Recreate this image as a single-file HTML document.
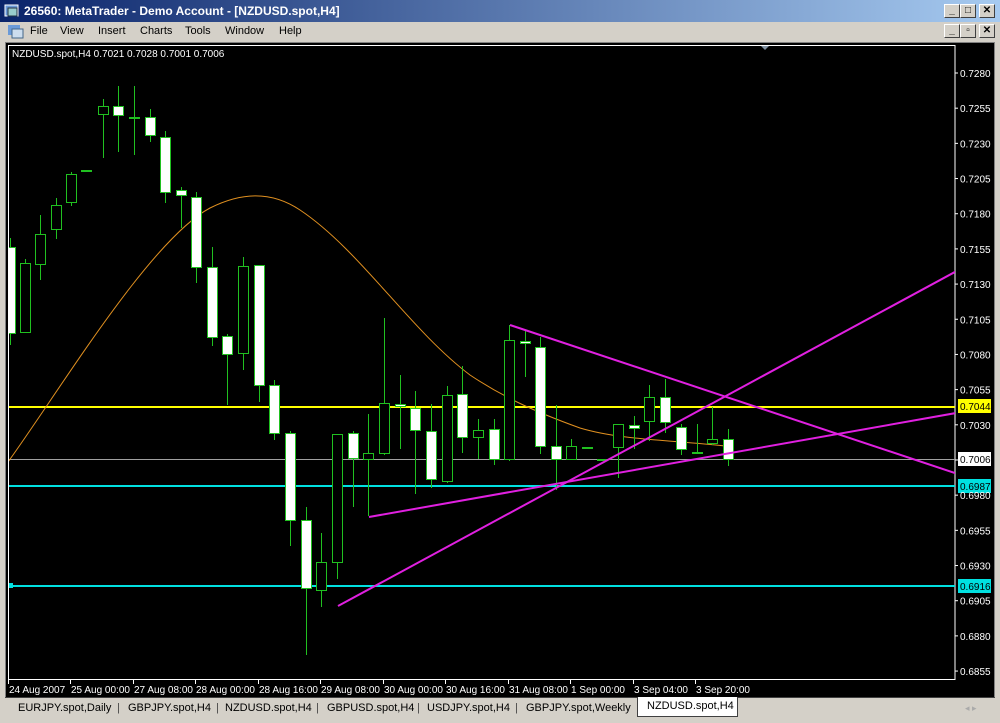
<!DOCTYPE html>
<html><head><meta charset="utf-8"><style>
*{margin:0;padding:0;box-sizing:border-box}
body{width:1000px;height:723px;overflow:hidden;background:#d4d0c8;font-family:Tahoma,"Liberation Sans",sans-serif;font-size:11px;position:relative}
.title{position:absolute;left:0;top:0;width:1000px;height:22px;background:linear-gradient(90deg,#0a246a,#a6caf0);color:#fff;font-weight:bold;font-size:12px;line-height:22px;padding-left:24px}
.menu{position:absolute;left:0;top:22px;width:1000px;height:19px;line-height:19px;font-size:11px}
.menu span{position:absolute;top:0}
.btn{position:absolute;width:16px;height:14px;background:#d4d0c8;border:1px solid;border-color:#fff #404040 #404040 #fff;font-size:10px;line-height:12px;text-align:center;color:#000;font-weight:bold}
.tabs{position:absolute;left:0;top:697px;width:1000px;height:26px;background:#d4d0c8}
.tab{position:absolute;top:3px;height:17px;line-height:16px;font-size:11px;color:#000}
</style></head><body>
<div class="title"><svg style="position:absolute;left:4px;top:3px" width="16" height="16"><rect x="1" y="2" width="13" height="11" fill="#6a9ad8" stroke="#fff"/><rect x="4" y="5" width="9" height="8" fill="#9cc" stroke="#234"/></svg>26560: MetaTrader - Demo Account - [NZDUSD.spot,H4]</div>
<div class="btn" style="left:944px;top:4px">_</div><div class="btn" style="left:960px;top:4px">□</div><div class="btn" style="left:979px;top:4px">✕</div>
<div class="menu">
<svg style="position:absolute;left:8px;top:2px" width="16" height="15"><rect x="0" y="1" width="12" height="10" fill="#6a9ad8"/><rect x="4" y="5" width="11" height="9" fill="#cde" stroke="#468"/></svg>
<span style="left:30px">File</span><span style="left:60px">View</span><span style="left:98px">Insert</span><span style="left:140px">Charts</span><span style="left:185px">Tools</span><span style="left:225px">Window</span><span style="left:279px">Help</span>
</div>
<div class="btn" style="left:944px;top:24px">_</div><div class="btn" style="left:960px;top:24px">▫</div><div class="btn" style="left:979px;top:24px">✕</div>
<svg style="position:absolute;left:0;top:41px" width="1000" height="656" viewBox="0 41 1000 656" font-family="Tahoma,'Liberation Sans',sans-serif" font-size="10">
<rect x="0" y="41" width="1000" height="656" fill="#d4d0c8"/>
<rect x="5" y="42" width="990" height="655" fill="#808080"/>
<rect x="6" y="43" width="988" height="654" fill="#000"/>
<rect x="8.5" y="45.5" width="946.5" height="634" fill="none" stroke="#fff"/>
<text x="12" y="57" fill="#fff">NZDUSD.spot,H4  0.7021 0.7028 0.7001 0.7006</text>
<polygon points="761,46 769,46 765,50" fill="#8090a0"/>
<defs><clipPath id="c"><rect x="9" y="46" width="946" height="633"/></clipPath></defs>
<g clip-path="url(#c)">
<line x1="9" y1="407" x2="955" y2="407" stroke="#ffff00" stroke-width="2"/>
<line x1="9" y1="459.5" x2="955" y2="459.5" stroke="#a0a0a0"/>
<line x1="9" y1="486" x2="955" y2="486" stroke="#00e0e0" stroke-width="2"/>
<line x1="9" y1="586" x2="955" y2="586" stroke="#00e0e0" stroke-width="2"/>
<rect x="8" y="583" width="5" height="5" fill="#00e0e0"/>
<path d="M8,462 C60,390 150,240 210,208 C240,193 270,190 300,210 C360,250 410,330 470,375 C500,395 530,410 580,428 C620,440 670,440 725,446" fill="none" stroke="#e09020" stroke-width="1"/>
<g stroke="#20c020" stroke-width="1" id="cs"></g>
<line x1="510" y1="325" x2="1000" y2="488" stroke="#e020e0" stroke-width="2"/>
<line x1="338" y1="606" x2="990" y2="253" stroke="#e020e0" stroke-width="2"/>
<line x1="369" y1="517" x2="990" y2="407" stroke="#e020e0" stroke-width="2"/>
</g>
<g fill="#fff">
<rect x="958" y="399" width="33" height="14" fill="#ffff00"/><text x="960" y="410" fill="#000">0.7044</text>
<rect x="958" y="452" width="33" height="14" fill="#fff"/><text x="960" y="463" fill="#000">0.7006</text>
<rect x="958" y="479" width="33" height="14" fill="#00e0e0"/><text x="960" y="490" fill="#000">0.6987</text>
<rect x="958" y="579" width="33" height="14" fill="#00e0e0"/><text x="960" y="590" fill="#000">0.6916</text>
</g>
<g id="ax" fill="#fff"></g>
</svg>
<div class="tabs">
<div style="position:absolute;left:5px;top:0;width:990px;height:1px;background:#404040"></div>
<span class="tab" style="left:18px">EURJPY.spot,Daily</span><span class="tab" style="left:117px;color:#444">|</span>
<span class="tab" style="left:128px">GBPJPY.spot,H4</span><span class="tab" style="left:216px;color:#444">|</span>
<span class="tab" style="left:225px">NZDUSD.spot,H4</span><span class="tab" style="left:316px;color:#444">|</span>
<span class="tab" style="left:327px">GBPUSD.spot,H4</span><span class="tab" style="left:417px;color:#444">|</span>
<span class="tab" style="left:427px">USDJPY.spot,H4</span><span class="tab" style="left:515px;color:#444">|</span>
<span class="tab" style="left:526px">GBPJPY.spot,Weekly</span>
<div class="tab" style="left:637px;top:0;width:101px;height:20px;background:#fff;border:1px solid #404040;border-top:none;padding-left:9px;line-height:19px">NZDUSD.spot,H4</div>
<span class="tab" style="left:965px;color:#aaa;font-size:9px">◂ ▸</span>
</div>
<script>
var C=[[10,238,247,333,345,1],[25,259,263,332,333,0],[40,215,234,264,280,0],[56,198,205,229,239,0],[71,172,174,202,206,0],[86,170,170,171,171,1],[103,99,106,114,158,0],[118,86,106,115,152,1],[134,86,117,118,155,1],[150,109,117,135,142,1],[165,131,137,192,203,1],[181,187,190,195,228,1],[196,192,197,267,283,1],[212,247,267,337,346,1],[227,334,336,354,405,1],[243,257,266,353,370,0],[259,265,265,385,402,1],[274,380,385,433,440,1],[290,431,433,520,546,1],[306,507,520,588,655,1],[321,533,562,590,607,0],[337,434,434,562,579,0],[353,431,433,458,507,1],[368,414,453,459,516,0],[384,318,403,453,455,0],[400,375,404,406,449,1],[415,391,408,430,494,1],[431,404,431,479,488,1],[447,386,395,481,483,0],[462,366,394,437,453,1],[478,419,430,437,459,0],[494,419,429,459,465,1],[509,325,340,459,461,0],[525,330,341,343,377,1],[540,337,347,446,454,1],[556,405,446,459,490,1],[571,439,446,459,459,0],[587,447,447,448,448,1],[602,459,459,460,460,1],[618,424,424,447,478,0],[634,416,425,428,449,1],[649,385,397,421,441,0],[665,379,397,422,433,1],[681,424,427,449,455,1],[697,424,452,453,453,1],[712,407,439,443,445,0],[728,429,439,459,466,1]];
var s='';C.forEach(function(c){var x=c[0];s+='<line x1="'+(x+.5)+'" y1="'+c[1]+'" x2="'+(x+.5)+'" y2="'+c[4]+'"/>';s+='<rect x="'+(x-4.5)+'" y="'+(c[2]+.5)+'" width="10" height="'+Math.max(1,c[3]-c[2])+'" fill="'+(c[5]?'#fff':'#000')+'"/>';});
document.getElementById('cs').innerHTML=s;
var a='';var hl=[407,459,486,586];for(var i=0;i<18;i++){var v=(0.7280-i*0.0025).toFixed(4);var y=73+i*35.18;a+='<rect x="955" y="'+(y-0.5)+'" width="3" height="1"/>';var ok=true;hl.forEach(function(h){if(Math.abs(y-h)<8)ok=false;});if(ok)a+='<text x="960" y="'+(y+4)+'">'+v+'</text>';}
var d=[[8,"24 Aug 2007"],[70,"25 Aug 00:00"],[133,"27 Aug 08:00"],[195,"28 Aug 00:00"],[258,"28 Aug 16:00"],[320,"29 Aug 08:00"],[383,"30 Aug 00:00"],[445,"30 Aug 16:00"],[508,"31 Aug 08:00"],[570,"1 Sep 00:00"],[633,"3 Sep 04:00"],[695,"3 Sep 20:00"]];
d.forEach(function(t){a+='<rect x="'+t[0]+'" y="680" width="1" height="4"/><text x="'+(t[0]+1)+'" y="693">'+t[1]+'</text>';});
document.getElementById('ax').innerHTML=a;
</script>
</body></html>
